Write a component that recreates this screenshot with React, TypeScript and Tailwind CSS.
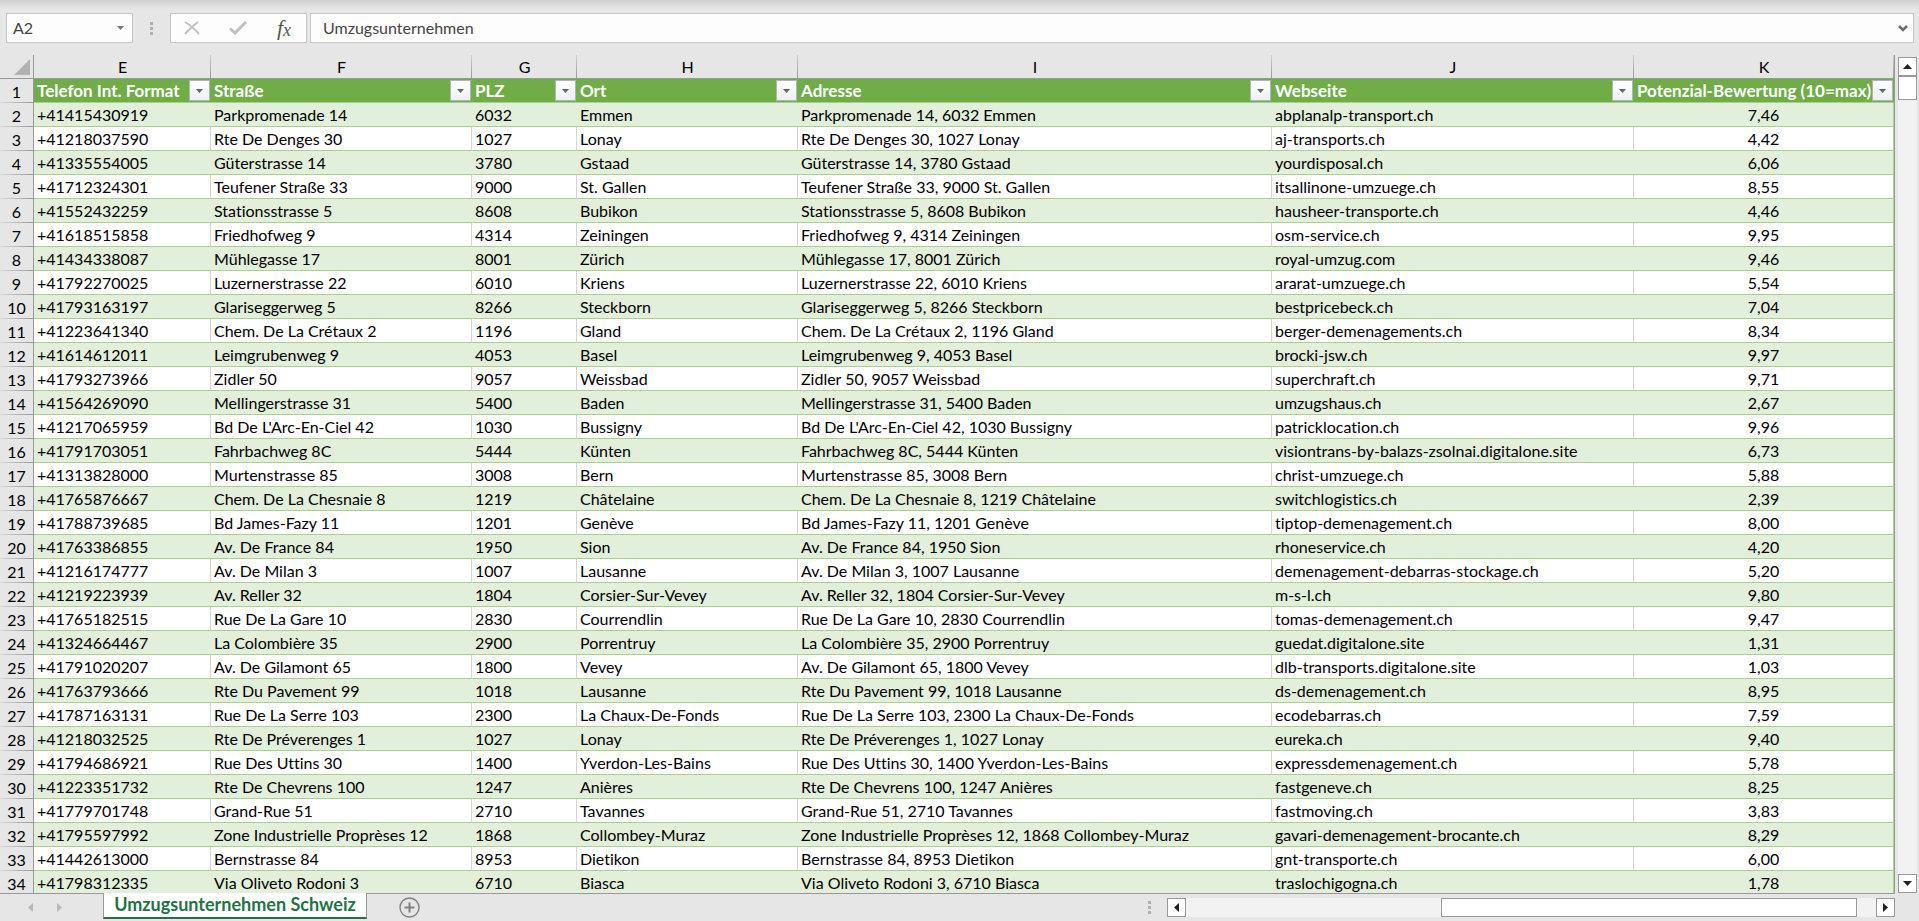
import React from "react";

type Row = [string, string, string, string, string, string];

// phone, street, postcode, town, website, score
const rows: Row[] = [
  ["+41415430919", "Parkpromenade 14", "6032", "Emmen", "abplanalp-transport.ch", "7,46"],
  ["+41218037590", "Rte De Denges 30", "1027", "Lonay", "aj-transports.ch", "4,42"],
  ["+41335554005", "Güterstrasse 14", "3780", "Gstaad", "yourdisposal.ch", "6,06"],
  ["+41712324301", "Teufener Straße 33", "9000", "St. Gallen", "itsallinone-umzuege.ch", "8,55"],
  ["+41552432259", "Stationsstrasse 5", "8608", "Bubikon", "hausheer-transporte.ch", "4,46"],
  ["+41618515858", "Friedhofweg 9", "4314", "Zeiningen", "osm-service.ch", "9,95"],
  ["+41434338087", "Mühlegasse 17", "8001", "Zürich", "royal-umzug.com", "9,46"],
  ["+41792270025", "Luzernerstrasse 22", "6010", "Kriens", "ararat-umzuege.ch", "5,54"],
  ["+41793163197", "Glariseggerweg 5", "8266", "Steckborn", "bestpricebeck.ch", "7,04"],
  ["+41223641340", "Chem. De La Crétaux 2", "1196", "Gland", "berger-demenagements.ch", "8,34"],
  ["+41614612011", "Leimgrubenweg 9", "4053", "Basel", "brocki-jsw.ch", "9,97"],
  ["+41793273966", "Zidler 50", "9057", "Weissbad", "superchraft.ch", "9,71"],
  ["+41564269090", "Mellingerstrasse 31", "5400", "Baden", "umzugshaus.ch", "2,67"],
  ["+41217065959", "Bd De L'Arc-En-Ciel 42", "1030", "Bussigny", "patricklocation.ch", "9,96"],
  ["+41791703051", "Fahrbachweg 8C", "5444", "Künten", "visiontrans-by-balazs-zsolnai.digitalone.site", "6,73"],
  ["+41313828000", "Murtenstrasse 85", "3008", "Bern", "christ-umzuege.ch", "5,88"],
  ["+41765876667", "Chem. De La Chesnaie 8", "1219", "Châtelaine", "switchlogistics.ch", "2,39"],
  ["+41788739685", "Bd James-Fazy 11", "1201", "Genève", "tiptop-demenagement.ch", "8,00"],
  ["+41763386855", "Av. De France 84", "1950", "Sion", "rhoneservice.ch", "4,20"],
  ["+41216174777", "Av. De Milan 3", "1007", "Lausanne", "demenagement-debarras-stockage.ch", "5,20"],
  ["+41219223939", "Av. Reller 32", "1804", "Corsier-Sur-Vevey", "m-s-l.ch", "9,80"],
  ["+41765182515", "Rue De La Gare 10", "2830", "Courrendlin", "tomas-demenagement.ch", "9,47"],
  ["+41324664467", "La Colombière 35", "2900", "Porrentruy", "guedat.digitalone.site", "1,31"],
  ["+41791020207", "Av. De Gilamont 65", "1800", "Vevey", "dlb-transports.digitalone.site", "1,03"],
  ["+41763793666", "Rte Du Pavement 99", "1018", "Lausanne", "ds-demenagement.ch", "8,95"],
  ["+41787163131", "Rue De La Serre 103", "2300", "La Chaux-De-Fonds", "ecodebarras.ch", "7,59"],
  ["+41218032525", "Rte De Préverenges 1", "1027", "Lonay", "eureka.ch", "9,40"],
  ["+41794686921", "Rue Des Uttins 30", "1400", "Yverdon-Les-Bains", "expressdemenagement.ch", "5,78"],
  ["+41223351732", "Rte De Chevrens 100", "1247", "Anières", "fastgeneve.ch", "8,25"],
  ["+41779701748", "Grand-Rue 51", "2710", "Tavannes", "fastmoving.ch", "3,83"],
  ["+41795597992", "Zone Industrielle Proprèses 12", "1868", "Collombey-Muraz", "gavari-demenagement-brocante.ch", "8,29"],
  ["+41442613000", "Bernstrasse 84", "8953", "Dietikon", "gnt-transporte.ch", "6,00"],
  ["+41798312335", "Via Oliveto Rodoni 3", "6710", "Biasca", "traslochigogna.ch", "1,78"],
];

const columns = [
  { letter: "E", title: "Telefon Int. Format", width: "w-[177px]" },
  { letter: "F", title: "Straße", width: "w-[261px]" },
  { letter: "G", title: "PLZ", width: "w-[105px]" },
  { letter: "H", title: "Ort", width: "w-[221px]" },
  { letter: "I", title: "Adresse", width: "" },
  { letter: "J", title: "Webseite", width: "w-[362px]" },
  { letter: "K", title: "Potenzial-Bewertung (10=max)", width: "w-[260px]" },
];

function Triangle({ dir, className }: { dir: "up" | "down" | "left" | "right"; className: string }) {
  const points = {
    up: "0,10 5,0 10,10",
    down: "0,0 10,0 5,10",
    left: "10,0 10,10 0,5",
    right: "0,0 10,5 0,10",
  }[dir];
  return (
    <svg viewBox="0 0 10 10" preserveAspectRatio="none" className={className} aria-hidden="true">
      <polygon points={points} fill="currentColor" />
    </svg>
  );
}

function Dots() {
  return (
    <div className="flex flex-col gap-[2px]" aria-hidden="true">
      <span className="size-[3px] bg-[#b0b0b0]" />
      <span className="size-[3px] bg-[#b0b0b0]" />
      <span className="size-[3px] bg-[#b0b0b0]" />
    </div>
  );
}

function ScrollButton({ dir, label }: { dir: "up" | "down" | "left" | "right"; label: string }) {
  const size = dir === "up" || dir === "down" ? "h-[5px] w-[9px]" : "h-[9px] w-[5px]";
  return (
    <button
      type="button"
      aria-label={label}
      className="flex size-[19px] shrink-0 items-center justify-center border border-[#999] bg-white text-[#222]"
    >
      <Triangle dir={dir} className={size} />
    </button>
  );
}

function FormulaBar() {
  return (
    <header className="flex h-[55px] shrink-0 items-start bg-[linear-gradient(#cfcfcf,#e6e6e6_9px)] pt-[13px] pr-[5px] pl-[6px] text-[#444]">
      <div className="flex h-[30px] w-[127px] items-center border border-[#c6c6c6] bg-[#fdfdfd] pr-2 pl-1.5">
        <input aria-label="Namenfeld" defaultValue="A2" className="min-w-0 flex-1 bg-transparent text-base outline-none" />
        <button type="button" aria-label="Namen anzeigen" className="text-[#777]">
          <Triangle dir="down" className="h-1 w-[7px]" />
        </button>
      </div>
      <div className="flex h-[30px] w-[37px] items-center justify-center">
        <Dots />
      </div>
      <div className="flex h-[30px] w-[137px] items-center justify-between border border-[#c6c6c6] bg-[#fdfdfd] pr-[15px] pl-[13px]">
        <button type="button" aria-label="Abbrechen">
          <svg viewBox="0 0 16 14" className="h-3.5 w-4" fill="none" stroke="#c0c0c0" strokeWidth="2">
            <path d="M1 1 Q8 5 15 13 M14 1 Q7 6 1 13" />
          </svg>
        </button>
        <button type="button" aria-label="Eingeben">
          <svg viewBox="0 0 18 14" className="h-3.5 w-[18px]" fill="none" stroke="#c0c0c0" strokeWidth="3">
            <path d="M1 7.5 L6 12 L17 1" />
          </svg>
        </button>
        <button
          type="button"
          aria-label="Funktion einfügen"
          className="flex h-6 items-center font-['Liberation_Serif',serif] text-[22px] leading-6 text-[#555] italic"
        >
          f<span className="pt-1 text-lg leading-5">x</span>
        </button>
      </div>
      <div className="ml-[3px] flex h-[30px] flex-1 items-center border border-[#c6c6c6] bg-[#fdfdfd] pr-[5px] pl-3">
        <input
          aria-label="Bearbeitungsleiste"
          defaultValue="Umzugsunternehmen"
          className="min-w-0 flex-1 bg-transparent text-base outline-none"
        />
        <button type="button" aria-label="Bearbeitungsleiste erweitern">
          <svg viewBox="0 0 10 7" className="h-[7px] w-2.5" fill="none" stroke="#707070" strokeWidth="2.6">
            <path d="M1 1 L5 5 L9 1" />
          </svg>
        </button>
      </div>
    </header>
  );
}

function Sheet() {
  return (
    <table className="w-full table-fixed border-separate border-spacing-0 border-r border-[#999] text-left text-base leading-[23px] whitespace-nowrap text-black">
      <colgroup>
        <col className="w-[34px]" />
        {columns.map((c) => (
          <col key={c.letter} className={c.width} />
        ))}
      </colgroup>
      <thead>
        <tr className="h-6 bg-[#e6e6e6]">
          <td className="h-6 border-r border-b border-[#999] p-0">
            <button type="button" aria-label="Alles auswählen" className="flex h-[23px] w-full items-center justify-end pr-[3px]">
              <svg viewBox="0 0 16 16" className="size-4" aria-hidden="true">
                <polygon points="16,0 16,16 0,16" fill="#b2b2b2" />
              </svg>
            </button>
          </td>
          {columns.map((c) => (
            <th
              key={c.letter}
              scope="col"
              className="h-6 border-b border-[#999] bg-[linear-gradient(#d0d0d0,#999)] bg-[length:1px_100%] bg-right bg-no-repeat p-0 text-center font-normal"
            >
              {c.letter}
            </th>
          ))}
        </tr>
        <tr className="h-6 bg-[#70ad47] text-white">
          <RowNumber n={1} />
          {columns.map((c) => (
            <th key={c.letter} scope="col" className="h-6 border-b border-[#a9d08e] p-0 pl-[3px] text-[17px] font-bold">
              <div className="flex h-[23px] items-center justify-between pr-px">
                <span className="min-w-0">{c.title}</span>
                <button
                  type="button"
                  aria-label={`${c.title} filtern`}
                  className="flex size-[21px] shrink-0 items-center justify-center border border-[#b0b3c0] bg-linear-to-b from-white to-[#eceff5] text-[#666]"
                >
                  <Triangle dir="down" className="h-1 w-[7px]" />
                </button>
              </div>
            </th>
          ))}
        </tr>
      </thead>
      <tbody>
        {rows.map(([phone, street, zip, town, site, score], i) => {
          const cells = [phone, street, zip, town, `${street}, ${zip} ${town}`, site];
          const banded = i % 2 === 0;
          return (
            <tr key={phone} className={banded ? "h-6 bg-[#e2efda]" : "h-6 bg-white"}>
              <RowNumber n={i + 2} />
              {cells.map((text, j) => (
                <td
                  key={j}
                  className={
                    banded
                      ? "h-6 border-b border-[#a9d08e] p-0 pl-[3px]"
                      : "h-6 border-r border-b border-r-[#d4d4d4] border-b-[#a9d08e] p-0 pl-[3px]"
                  }
                >
                  {text}
                </td>
              ))}
              <td className="h-6 border-r border-b border-[#a9d08e] p-0 text-center">{score}</td>
            </tr>
          );
        })}
      </tbody>
    </table>
  );
}

function RowNumber({ n }: { n: number }) {
  return (
    <th
      scope="row"
      className="h-6 border-r border-[#999] bg-[#e6e6e6] bg-[linear-gradient(to_right,#d8d8d8,#999)] bg-[length:100%_1px] bg-bottom bg-no-repeat p-0 text-center font-normal text-black"
    >
      {n}
    </th>
  );
}

function VerticalScroll() {
  return (
    <div className="flex w-[24px] shrink-0 flex-col items-center pt-0.5">
      <ScrollButton dir="up" label="Nach oben" />
      <div className="w-[19px] flex-1 bg-[#f2f2f2]">
        <div className="h-6 border border-[#999] bg-white" />
      </div>
      <ScrollButton dir="down" label="Nach unten" />
    </div>
  );
}

function SheetBar() {
  return (
    <footer className="flex h-7 shrink-0 items-start pr-6">
      <div className="flex h-full w-[103px] shrink-0 items-center gap-6 border-t border-[#999] pl-7 text-[#b8b8b8]">
        <button type="button" aria-label="Vorheriges Blatt">
          <Triangle dir="left" className="h-[9px] w-[5px]" />
        </button>
        <button type="button" aria-label="Nächstes Blatt">
          <Triangle dir="right" className="h-[9px] w-[5px]" />
        </button>
      </div>
      <button
        type="button"
        className="flex h-[26px] w-[264px] shrink-0 items-start justify-center border-r border-b-2 border-l border-r-[#999] border-b-[#217346] border-l-[#999] bg-white text-lg leading-[22px] font-bold whitespace-nowrap text-[#217346]"
      >
        Umzugsunternehmen Schweiz
      </button>
      <div className="flex h-full flex-1 items-center border-t border-[#999]">
        <button type="button" aria-label="Neues Blatt" className="ml-8">
          <svg viewBox="0 0 21 21" className="size-[21px]" fill="none" stroke="#808080">
            <circle cx="10.5" cy="10.5" r="9.5" strokeWidth="1.4" />
            <path d="M10.5 5.5 V15.5 M5.5 10.5 H15.5" strokeWidth="2" />
          </svg>
        </button>
        <div className="mr-4 ml-auto">
          <Dots />
        </div>
        <div className="flex w-1/2 max-w-[728px] items-center">
          <ScrollButton dir="left" label="Nach links" />
          <div className="flex h-[19px] flex-1 justify-end bg-[#f2f2f2] pr-[19px]">
            <div className="w-[62%] border border-[#999] bg-white" />
          </div>
          <ScrollButton dir="right" label="Nach rechts" />
        </div>
      </div>
    </footer>
  );
}

export default function App() {
  return (
    <div className="flex h-screen flex-col overflow-hidden bg-[#e6e6e6] font-[Lato,'Noto_Sans',sans-serif] [font-variant-ligatures:none]">
      <FormulaBar />
      <main className="flex min-h-0 flex-1">
        <div className="min-w-0 flex-1 overflow-hidden">
          <Sheet />
        </div>
        <VerticalScroll />
      </main>
      <SheetBar />
    </div>
  );
}
